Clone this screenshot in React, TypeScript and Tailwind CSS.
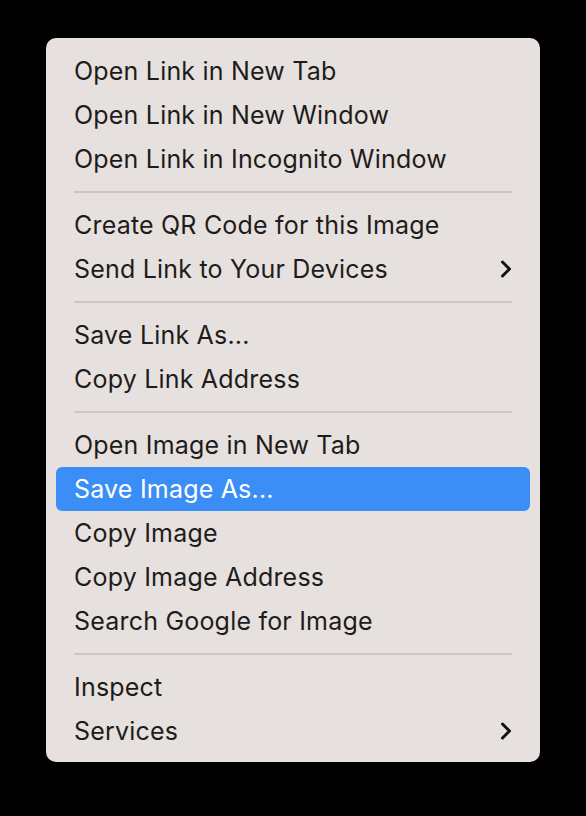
import React from "react";

type Item = { label: string; sub?: boolean; active?: boolean } | "sep";

const items: Item[] = [
  { label: "Open Link in New Tab" },
  { label: "Open Link in New Window" },
  { label: "Open Link in Incognito Window" },
  "sep",
  { label: "Create QR Code for this Image" },
  { label: "Send Link to Your Devices", sub: true },
  "sep",
  { label: "Save Link As..." },
  { label: "Copy Link Address" },
  "sep",
  { label: "Open Image in New Tab" },
  { label: "Save Image As...", active: true },
  { label: "Copy Image" },
  { label: "Copy Image Address" },
  { label: "Search Google for Image" },
  "sep",
  { label: "Inspect" },
  { label: "Services", sub: true },
];

function Chevron({ color }: { color: string }) {
  return (
    <svg width="14" height="20" viewBox="0 0 14 20" fill="none">
      <path d="M3.5 3 L10.5 10 L3.5 17" stroke={color} strokeWidth="3" strokeLinecap="round" strokeLinejoin="round" />
    </svg>
  );
}

export default function App() {
  return (
    <div className="w-[586px] h-[816px] bg-black pt-[38px] pl-[46px]" style={{ fontFamily: "Inter, 'Noto Sans', sans-serif" }}>
      <div className="w-[494px] h-[724px] bg-[#e6e1de] rounded-[10px] pt-[11px] px-[10px] flex flex-col">
        {items.map((it, i) =>
          it === "sep" ? (
            <div key={i} className="h-[22px] flex items-center px-[18px]">
              <div className="h-[2px] w-full bg-[#cbc6c3]" />
            </div>
          ) : (
            <div
              key={i}
              className={
                "h-[44px] flex items-center justify-between pl-[18px] pr-[17px] rounded-[6px] text-[25px] " +
                (it.active ? "bg-[#3a8ef6] text-white" : "text-[#1e1c1b]")
              }
            >
              <span className="tracking-[0.2px] pt-[1px]">{it.label}</span>
              {it.sub && <Chevron color={it.active ? "#fff" : "#111"} />}
            </div>
          )
        )}
      </div>
    </div>
  );
}
